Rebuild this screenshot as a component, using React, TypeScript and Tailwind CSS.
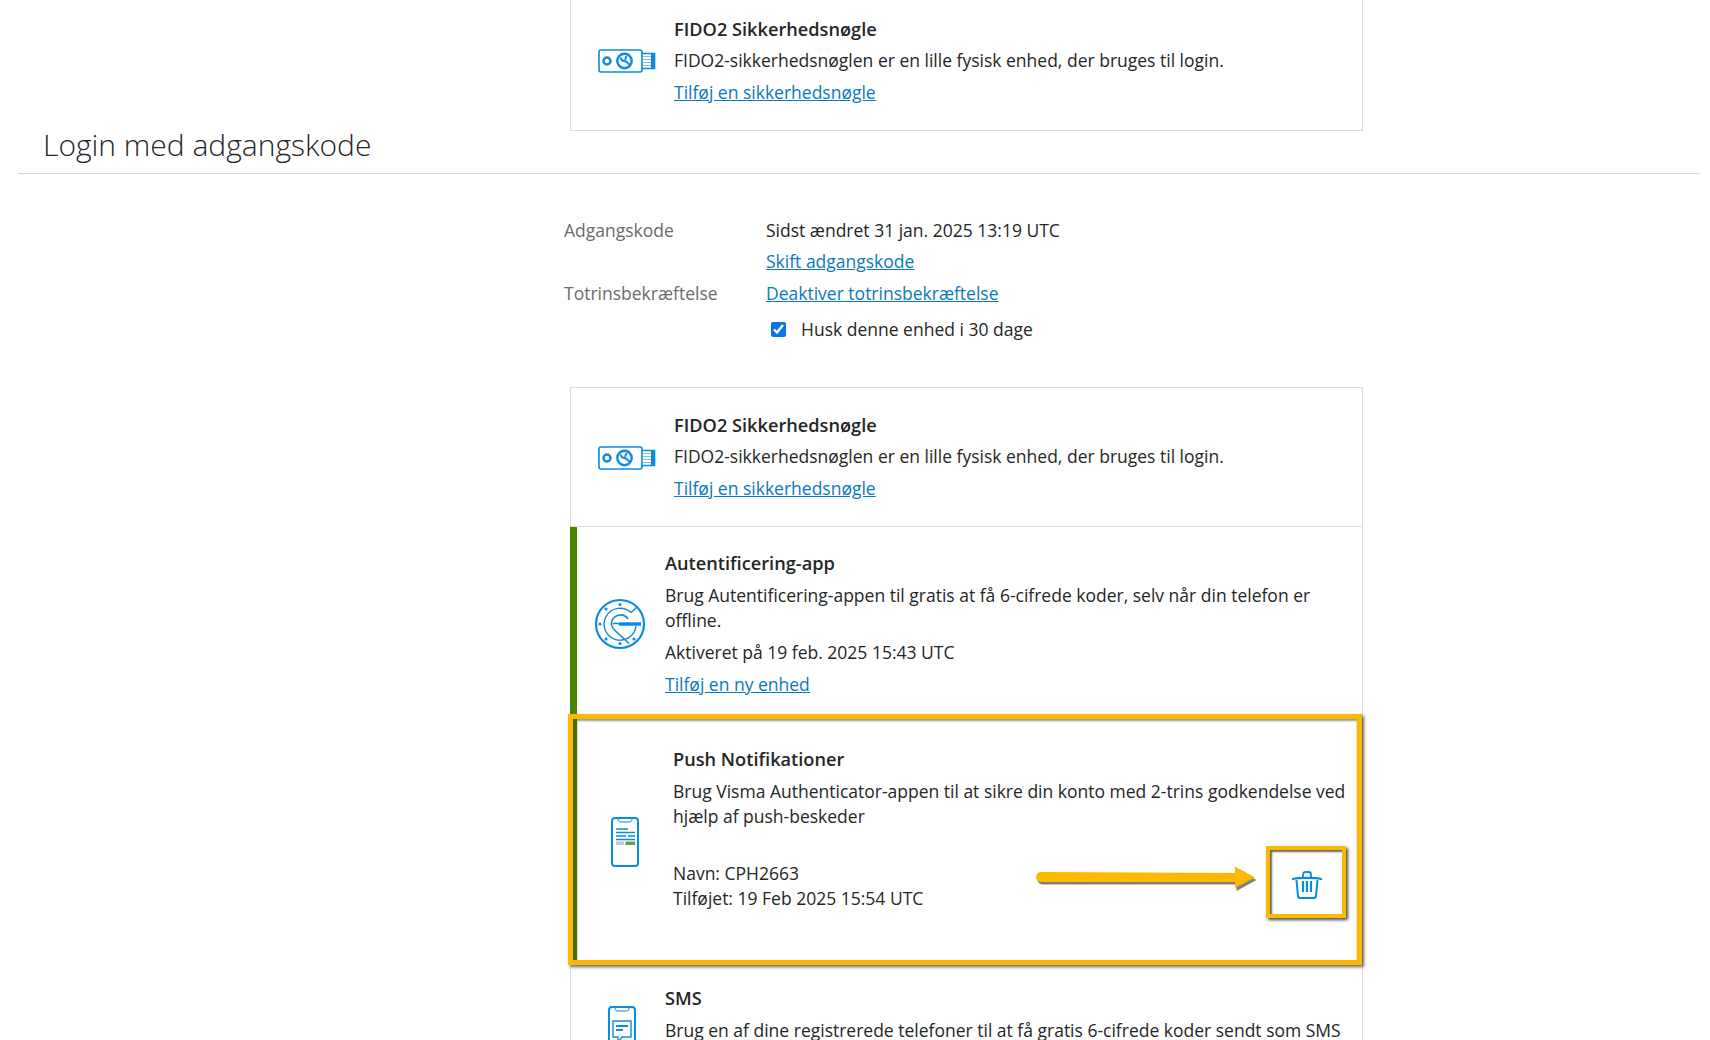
import React from "react";

const B = "#0b8ce0";

function KeyIcon() {
  return (
    <svg width="58" height="24" viewBox="0 0 58 24" fill="none" className="shrink-0">
      <rect x="1" y="1" width="43" height="22" rx="2" stroke={B} strokeWidth="1.6" />
      <circle cx="9" cy="12" r="3.5" stroke={B} strokeWidth="2.4" />
      <circle cx="26.5" cy="12" r="7.2" stroke={B} strokeWidth="2.4" />
      <path d="M22.5 8.5c1 3 3 4 5 3.500l4.500 4M27 11l1.500-4" stroke={B} strokeWidth="2" />
      <path d="M44 4.500h12.500v15H44" stroke={B} strokeWidth="1.6" />
      <path d="M45 7.500h8M45 10.500h8M45 13.500h8M45 16.500h8" stroke="#7cc3ef" strokeWidth="1.2" />
      <path d="M53 5v14h3.500V5z" fill={B} />
    </svg>
  );
}

function AuthIcon() {
  return (
    <svg width="52" height="52" viewBox="0 0 52 52" fill="none" className="shrink-0">
      <circle cx="26" cy="26" r="24" stroke={B} strokeWidth="2.2" />
      <path d="M37 14.500A16 16 0 1 0 42 28" stroke={B} strokeWidth="1.4" />
      <path d="M37 14.500l6-5.500" stroke={B} strokeWidth="1.4" />
      <path d="M34 21a9 9 0 0 0-16.500 4c-.5 3 1 5 3 7l14.500 13.500" stroke={B} strokeWidth="1.6" />
      <path d="M25 26h22" stroke={B} strokeWidth="3.4" />
      <path d="M19 26c2-1 4-1 6 0" stroke={B} strokeWidth="1.4" />
      <g fill={B}>
        <circle cx="26" cy="6.500" r="1.600" />
        <circle cx="12" cy="11" r="1.600" />
        <circle cx="6" cy="26" r="1.600" />
        <circle cx="12" cy="41" r="1.600" />
        <circle cx="26" cy="45.500" r="1.600" />
        <circle cx="40" cy="41" r="1.600" />
      </g>
    </svg>
  );
}

function PhoneIcon() {
  return (
    <svg width="28" height="50" viewBox="0 0 28 50" fill="none" className="shrink-0">
      <rect x="1" y="1" width="26" height="48" rx="3" stroke={B} strokeWidth="2" />
      <path d="M7 2c0 2 1 3 3 3h8c2 0 3-1 3-3" stroke={B} strokeWidth="1" />
      <path d="M5 12h12M5 15.500h19M5 19h10M17 19h7M5 22.500h19" stroke={B} strokeWidth="1.600" />
      <rect x="5" y="24.500" width="8" height="3.500" fill="#c5c8d0" />
      <rect x="14.500" y="24.500" width="9.500" height="3.500" fill="#5c9e5c" />
    </svg>
  );
}

function SmsIcon() {
  return (
    <svg width="28" height="50" viewBox="0 0 28 50" fill="none" className="shrink-0">
      <rect x="1" y="1" width="26" height="48" rx="3" stroke={B} strokeWidth="2" />
      <path d="M7 2c0 2 1 3 3 3h8c2 0 3-1 3-3" stroke={B} strokeWidth="1" />
      <path d="M5 15h18v16H14l-4 5v-5H5z" stroke={B} strokeWidth="1.400" />
      <path d="M8 20h12M8 24h7" stroke={B} strokeWidth="2" />
    </svg>
  );
}

function TrashIcon() {
  return (
    <svg width="30" height="30" viewBox="0 0 30 30" fill="none">
      <path d="M1 9c4-1.500 24-1.500 28 0" stroke={B} strokeWidth="2.200" strokeLinecap="round" />
      <path d="M11 7V4.500C11 3 12 2 13.500 2h3C18 2 19 3 19 4.500V7" stroke={B} strokeWidth="1.800" />
      <path d="M4.500 10l1.500 16c.2 1.500 1 2 2.200 2h13.600c1.200 0 2-.5 2.200-2l1.500-16" stroke={B} strokeWidth="2" />
      <path d="M11 11v11M15 11v11M19 11v11" stroke={B} strokeWidth="2.200" />
    </svg>
  );
}

function Arrow() {
  return (
    <svg width="226" height="30" viewBox="0 0 226 30" className="absolute left-[461px] top-[145px]">
      <path
        d="M7 8.500L201 9.500V3L221 14L201 25V18.500L7 18.500a5 5 0 0 1 0-10z"
        fill="#000"
        opacity=".5"
        transform="translate(1.5 2)"
      />
      <path d="M7 8L201 9V2.500L221 13.500L201 24V18L7 18a5 5 0 0 1 0-10z" fill="#fdb900" />
    </svg>
  );
}

const Link = ({ children }: { children: React.ReactNode }) => (
  <a href="#" className="text-[#0a78c2] underline">
    {children}
  </a>
);

const Title = ({ children }: { children: React.ReactNode }) => (
  <div className="font-semibold text-[18.2px]">{children}</div>
);

function FidoRow({ tall }: { tall?: boolean }) {
  return (
    <div className={`flex items-center pl-[26px] ${tall ? "h-[139px]" : "h-[138px]"}`}>
      <div className="w-[77px] shrink-0 pl-px mt-[1px]">
        <KeyIcon />
      </div>
      <div className={`flex flex-col gap-[7px] leading-[25px] ${tall ? "mt-[1px]" : "-mt-[1px]"}`}>
        <div className="-mb-px">
          <Title>FIDO2 Sikkerhedsnøgle</Title>
        </div>
        <div>FIDO2-sikkerhedsnøglen er en lille fysisk enhed, der bruges til login.</div>
        <div>
          <Link>Tilføj en sikkerhedsnøgle</Link>
        </div>
      </div>
    </div>
  );
}

export default function App() {
  return (
    <div
      className="h-[1040px] overflow-hidden bg-white text-[17.5px] leading-[25px] text-[#252626]"
      style={{ fontFamily: '"Open Sans", sans-serif' }}
    >
      <div className="-mt-[10px] ml-[570px] w-[793px] border border-[#dcdcdc]">
        <FidoRow tall />
      </div>

      <div className="ml-[18px] mr-[10px] border-b border-[#d8d8d8] pl-[25px] h-[43px]">
        <h1 className="text-[30px] font-light leading-[28px]">Login med adgangskode</h1>
      </div>

      <div className="ml-[564px] mt-[44px] grid grid-cols-[202px_1fr] gap-y-[7px]">
        <div className="text-[#6b6b6b]">Adgangskode</div>
        <div>Sidst ændret 31 jan. 2025 13:19 UTC</div>
        <div />
        <div className="-mt-px">
          <Link>Skift adgangskode</Link>
        </div>
        <div className="text-[#6b6b6b]">Totrinsbekræftelse</div>
        <div>
          <Link>Deaktiver totrinsbekræftelse</Link>
        </div>
        <div />
        <label className="flex items-center mt-[4px] pl-[5px]">
          <input type="checkbox" defaultChecked className="w-[15px] h-[15px] accent-[#0b76e8] mr-[15px]" />
          Husk denne enhed i 30 dage
        </label>
      </div>

      <div className="ml-[570px] mt-[45px] w-[793px] border-x border-t border-[#dcdcdc]">
        <div className="border-b border-[#dcdcdc]">
          <FidoRow />
        </div>

        <div className="flex items-center h-[188px] border-l-[7px] -ml-px border-[#4d8400] pl-[16px] pr-[40px]">
          <div className="w-[72px] shrink-0 mt-[6px] pl-px">
            <AuthIcon />
          </div>
          <div className="flex flex-col gap-[7px] mt-[6px]">
            <Title>Autentificering-app</Title>
            <div className="w-[660px]">
              Brug Autentificering-appen til gratis at få 6-cifrede koder, selv når din telefon er offline.
            </div>
            <div>Aktiveret på 19 feb. 2025 15:43 UTC</div>
            <div>
              <Link>Tilføj en ny enhed</Link>
            </div>
          </div>
        </div>

        <div className="relative -ml-[3px] h-[251px] -mt-[1px] border-[5px] border-[#fdb900] bg-white shadow-[2px_2px_3px_rgba(0,0,0,0.6)]">
          <div className="flex items-center h-full border-l-[4px] border-[#3f6f00] pl-[34px] pr-[4px] shadow-[inset_0_2px_2px_rgba(0,0,0,0.4)]">
            <div className="w-[62px] shrink-0 mt-[4px]">
              <PhoneIcon />
            </div>
            <div className="flex flex-col -mt-[22px]">
              <div className="mb-[7px]">
                <Title>Push Notifikationer</Title>
              </div>
              <div>Brug Visma Authenticator-appen til at sikre din konto med 2-trins godkendelse ved hjælp af push-beskeder</div>
              <div className="mt-[32px]">Navn: CPH2663</div>
              <div>Tilføjet: 19 Feb 2025 15:54 UTC</div>
            </div>
          </div>
          <Arrow />
          <div className="absolute left-[693px] top-[127px] w-[80px] h-[72px] pt-[6px] pl-[2px] border-[4px] border-[#fdb900] flex items-center justify-center shadow-[2px_2px_3px_rgba(0,0,0,0.7),inset_2px_2px_2px_rgba(0,0,0,0.6)]">
            <TrashIcon />
          </div>
        </div>

        <div className="flex pl-[37px] pr-[10px] pt-[21px]">
          <div className="w-[57px] shrink-0 pt-[20px]">
            <SmsIcon />
          </div>
          <div className="flex flex-col gap-[7px]">
            <Title>SMS</Title>
            <div>Brug en af dine registrerede telefoner til at få gratis 6-cifrede koder sendt som SMS</div>
          </div>
        </div>
      </div>
    </div>
  );
}
